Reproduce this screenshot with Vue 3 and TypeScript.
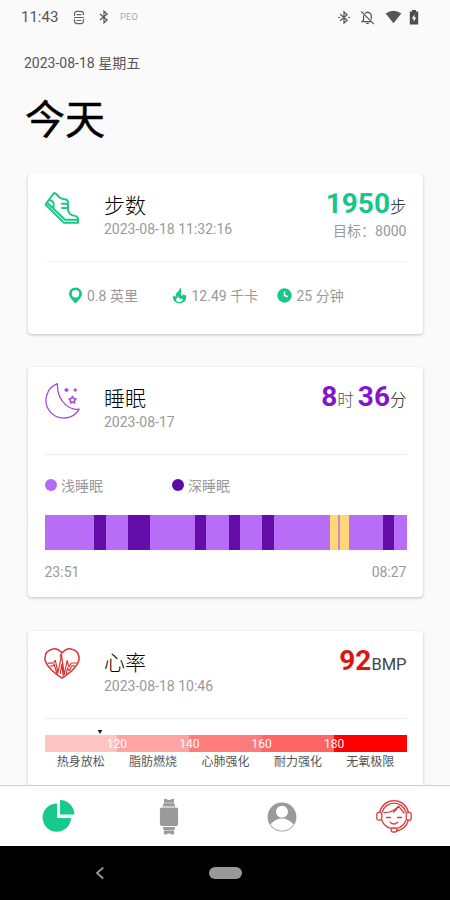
<script setup lang="ts">
interface SleepSegment {
  kind: 'light' | 'deep' | 'awake' | 'gap'
  span: number
}

interface HeartZone {
  label: string
  color: string
  upper?: number
}

const sleep: SleepSegment[] = [
  { kind: 'light', span: 49.5 },
  { kind: 'deep', span: 11.5 },
  { kind: 'light', span: 22.5 },
  { kind: 'deep', span: 22 },
  { kind: 'light', span: 45 },
  { kind: 'deep', span: 11 },
  { kind: 'light', span: 22.5 },
  { kind: 'deep', span: 11 },
  { kind: 'light', span: 22.5 },
  { kind: 'deep', span: 11.5 },
  { kind: 'light', span: 56 },
  { kind: 'awake', span: 8.5 },
  { kind: 'gap', span: 2 },
  { kind: 'awake', span: 9 },
  { kind: 'light', span: 33.5 },
  { kind: 'deep', span: 11.5 },
  { kind: 'light', span: 12.5 },
]

const zones: HeartZone[] = [
  { label: '热身放松', color: '#ffc5c5', upper: 120 },
  { label: '脂肪燃烧', color: '#ffa3a3', upper: 140 },
  { label: '心肺强化', color: '#ff7c7c', upper: 160 },
  { label: '耐力强化', color: '#ff6565', upper: 180 },
  { label: '无氧极限', color: '#fe0000' },
]
</script>

<template>
  <div class="screen">
    <header class="status">
      <span class="clock">11:43</span>
      <svg class="s-cast" viewBox="0 0 12 16" fill="none" stroke="#666" stroke-width="1.3">
        <path d="M1.2 6.5V4.5Q1.2 1.5 4 1.5H8Q10.8 1.5 10.8 4.5V5.2M1.2 9.5V11.5Q1.2 14.5 4 14.5H8Q10.8 14.5 10.8 11.5V9.5M3.4 5H8.6M3.4 11.2H8.6M.6 8H11.4" />
      </svg>
      <svg class="s-bt" viewBox="0 0 10 14" fill="none" stroke="#555" stroke-width="1.2">
        <path d="M1 4L8.2 10L5 12.8V1.2L8.2 4L1 10" />
      </svg>
      <span class="peo">PEO</span>
      <span class="grow"></span>
      <svg class="s-bt2" viewBox="0 0 14 16" fill="none" stroke="#555" stroke-width="1.3">
        <path d="M3 4.5L10.3 11L7 14V2L10.3 5L3 11.5M.8 8H2.8M11.2 8H13.2" />
      </svg>
      <svg class="s-bell" viewBox="0 0 16 16" fill="none" stroke="#555" stroke-width="1.3">
        <path d="M1.2 1.5L14.8 15M3.8 5.5V11L2.2 12.5H12M5.2 3.8L8 2.3Q12 3 12 6.5V10M6.7 14.2H9.3" />
      </svg>
      <svg class="s-wifi" viewBox="0 0 18 14"><path d="M.7 3.4Q9-2.6 17.3 3.4L9 13.6Z" fill="#555" /></svg>
      <svg class="s-bat" viewBox="0 0 10 15">
        <path d="M3 0H7V1.6H9.2V14.6H.8V1.6H3Z" fill="#4d4d4d" />
        <path d="M5.5 4.2L2.8 8.7H4.6V12L7.3 7.6H5.5Z" fill="#fff" />
      </svg>
    </header>

    <div class="heading">
      <div class="date">2023-08-18 星期五</div>
      <h1>今天</h1>
    </div>

    <main class="cards">
      <section class="card steps">
        <div class="head">
          <svg class="icon" viewBox="0 0 36 36" fill="none" stroke="#17c787" stroke-width="1.9" stroke-linejoin="round" stroke-linecap="round">
            <path d="M9.7 2.3L1.5 13.5L19.7 31.7H34V27.5Q33.4 24.8 28.5 24.4Q25.5 23.5 24 19.5V11Q23.5 8.5 20.5 8.3Q16.5 8 14.2 5.3Q12.3 1.7 9.7 2.3Z" />
            <path d="M3.2 11.7L21 28.7H33.6M5.3 9.2Q9.5 9.5 9.7 13.2V16.2M17.8 12.8H22.8M18 17H23.5" />
          </svg>
          <div class="title"><h2>步数</h2><p>2023-08-18 11:32:16</p></div>
          <div class="value">
            <div class="big"><b>1950</b>步</div>
            <p>目标：8000</p>
          </div>
        </div>
        <div class="stats">
          <div class="stat place">
            <svg viewBox="0 0 16 18"><path fill-rule="evenodd" d="M8 .4A7 7 0 0 0 1 7.4Q1 10.8 8 17.6Q15 10.8 15 7.4A7 7 0 0 0 8 .4ZM8 3.2A4 4 0 1 1 8 11.2A4 4 0 0 1 8 3.2Z" fill="#17c787" /></svg>
            <span>0.8 英里</span>
          </div>
          <div class="stat fire">
            <svg viewBox="0 0 16 18"><path fill-rule="evenodd" d="M8.2.3Q10.8 2.4 9.7 5.6Q8.7 7.7 10.4 9Q11.8 9.8 11.5 6.5Q12.2 8.3 13.3 8.6Q14.6 8.4 14.4 7.6Q16.5 12.2 13 15.6Q8 19.2 3.4 16Q-.2 12.7 1.3 8.6Q2.6 10.8 3.9 9.7Q3.4 7.2 6.2 4.9Q8.8 3 8.2.3ZM6.8 9.5Q6.6 11 5 12Q3.4 14.4 6 15.7Q8.8 16.8 10.8 14.9Q12 13.5 10.8 12.2Q9.5 13 8.2 12.2Q6.8 11.3 6.8 9.5Z" fill="#17c787" /></svg>
            <span>12.49 千卡</span>
          </div>
          <div class="stat time">
            <svg viewBox="0 0 16 18"><circle cx="8" cy="9" r="7.7" fill="#17c787" /><path d="M8 4.8V9L11.4 10.4" stroke="#fff" stroke-width="1.6" fill="none" /></svg>
            <span>25 分钟</span>
          </div>
        </div>
      </section>

      <section class="card sleep">
        <div class="head">
          <svg class="icon" viewBox="0 0 36 36" fill="none" stroke="#a14bdb" stroke-width="1.3" stroke-linejoin="round">
            <path d="M13.3.7A17.8 17.8 0 1 0 35.2 26.2Q28 27 22.2 22.3Q13 14.5 13.3.7Z" />
            <path d="M28.5 13.4L29.7 15.6L32 16L30.4 17.7L30.7 20L28.5 19L26.3 20L26.6 17.7L25 16L27.3 15.6Z" stroke-width="1.5" />
            <path d="M22.5 4.9L23.4 6.1L24.6 7L23.4 7.9L22.5 9.1L21.6 7.9L20.4 7L21.6 6.1ZM31.2 5.4L31.9 6.3L32.8 7L31.9 7.7L31.2 8.6L30.5 7.7L29.6 7L30.5 6.3Z" fill="#a14bdb" stroke-width=".7" />
          </svg>
          <div class="title"><h2>睡眠</h2><p>2023-08-17</p></div>
          <div class="value"><div class="big"><b>8</b><span class="hour">时</span> <b>36</b>分</div></div>
        </div>
        <div class="legend">
          <div><i class="dot light-dot"></i>浅睡眠</div>
          <div><i class="dot deep-dot"></i>深睡眠</div>
        </div>
        <div class="sleep-bar">
          <span v-for="(s, i) in sleep" :key="i" :class="s.kind" :style="{ flexGrow: s.span }"></span>
        </div>
        <div class="range"><span>23:51</span><span>08:27</span></div>
      </section>

      <section class="card heart">
        <div class="head">
          <svg class="icon" viewBox="0 0 36 36" fill="none" stroke="#dc3434" stroke-width="1.5" stroke-linejoin="round">
            <path d="M18 5.8Q13.5 1 9 1.9Q1.2 3.3.9 11.3Q1.1 20 18 31.2Q34.9 20 35.1 11.3Q34.8 3.3 27 1.9Q22.5 1 18 5.8Z" />
            <path d="M18 5.8L15.8 9.5M3.6 16.2H9L11.3 13.4L14 25.5L17.5 8L20.3 27.5L23.1 13.5L25 20L27.4 16H33M5.5 19H8.5L10.2 17.5L13.4 28M16.2 27L17.8 17L19.2 29.5M22.2 27.5L23.5 21L25.2 23.7L28 18.8H31" stroke-width="1.2" />
          </svg>
          <div class="title"><h2>心率</h2><p>2023-08-18 10:46</p></div>
          <div class="value"><div class="big"><b>92</b>BMP</div></div>
        </div>
        <div class="pointer"><svg viewBox="0 0 6 5"><path d="M0 0H6L3 5Z" fill="#222" /></svg></div>
        <div class="zones">
          <div v-for="z in zones" :key="z.label" class="zone">
            <div class="band" :style="{ background: z.color }"><span v-if="z.upper">{{ z.upper }}</span></div>
            <div class="name">{{ z.label }}</div>
          </div>
        </div>
      </section>
    </main>

    <nav class="tabs">
      <div class="tab">
        <svg width="34" height="36" viewBox="0 0 34 36" fill="#17c98a"><path d="M15 4.4V18.9H29A14.2 14.2 0 1 1 15 4.4Z" /><path d="M18 1A14.5 14.5 0 0 1 32.3 15.5H18Z" /></svg>
      </div>
      <div class="tab">
        <svg width="20" height="38" viewBox="0 0 20 38" fill="#9a9a9a">
          <rect x=".9" y="9.5" width="18.2" height="18.4" rx="2" />
          <path d="M5 1H8L8.5 2H11.5L12 1H15V4.7H5ZM4.6 5.2H15.4L16.2 8.4H3.8ZM3.8 29H16.2L15.4 32.2H4.6ZM5 32.7H15V36.6H12L11.5 35.6H8.5L8 36.6H5Z" />
        </svg>
      </div>
      <div class="tab profile">
        <svg width="30" height="30" viewBox="0 0 30 30">
          <circle cx="15" cy="15" r="14.4" fill="#9a9a9a" />
          <path d="M3.4 22.3Q9 16.6 15 16.6T26.6 22.3A13.7 13.7 0 0 1 3.4 22.3Z" fill="#fff" />
          <circle cx="15" cy="9.8" r="6" fill="#fff" />
        </svg>
      </div>
      <div class="tab">
        <svg width="36" height="34" viewBox="0 0 36 34" fill="none" stroke="#dc3c3c" stroke-width="1.3" stroke-linecap="round">
          <path d="M3.7 12A14.7 14.7 0 0 1 32.3 12M6.2 12A12.3 12.3 0 0 1 29.8 12M6 20.5A12.3 12.3 0 0 0 15.2 28.3M29.8 20.5A12.3 12.3 0 0 1 20.8 28.3M32.2 20.7Q30 28.5 20.8 31" />
          <rect x=".8" y="12.4" width="5" height="7.8" rx="2" />
          <rect x="30.2" y="12.4" width="5" height="7.8" rx="2" />
          <rect x="15.2" y="28" width="5.6" height="4" rx="1.5" />
          <path d="M8 12.7Q17 12.8 22.5 6.2Q20.5 10 17.5 12.3M22.5 6.2L28 13M10.5 17.5H14.5M21.5 17.5H25.5M14.3 22.2Q18 25.8 21.7 22.2" />
        </svg>
      </div>
    </nav>

    <footer class="system">
      <svg width="10" height="14" viewBox="0 0 10 14"><path d="M8.2 1.5L2 7L8.2 12.5" fill="none" stroke="#999" stroke-width="1.8" /></svg>
      <span class="home"></span>
      <span class="blank"></span>
    </footer>
  </div>
</template>

<style>
html,
body {
  margin: 0;
  background: #fafafa;
}
</style>

<style scoped>
* {
  box-sizing: border-box;
}
.screen {
  width: 450px;
  height: 900px;
  overflow: hidden;
  display: flex;
  flex-direction: column;
  background: #fafafa;
  font-family: Roboto, 'Noto Sans CJK SC', sans-serif;
  color: #333;
}
h1,
h2,
p {
  margin: 0;
}
svg {
  display: block;
  flex: none;
}
.status {
  height: 34px;
  flex: none;
  display: flex;
  align-items: center;
  padding: 0 31px 0 21px;
}
.clock {
  width: 52px;
  font-size: 15px;
  color: #555;
}
.s-cast {
  width: 12px;
  height: 15px;
}
.s-bt {
  width: 10px;
  height: 14px;
  margin-left: 14px;
}
.peo {
  margin-left: 11px;
  font-size: 9px;
  color: #aaa;
  letter-spacing: 0.4px;
}
.grow {
  flex: 1;
}
.s-bt2 {
  width: 14px;
  height: 15px;
  margin-right: 9px;
}
.s-bell {
  width: 15px;
  height: 15px;
  margin-right: 10px;
}
.s-wifi {
  width: 17px;
  height: 14px;
  margin-right: 7px;
}
.s-bat {
  width: 10px;
  height: 15px;
}
.heading {
  height: 140px;
  flex: none;
  padding: 19px 25px 0 24px;
}
.date {
  font-size: 14px;
  line-height: 20px;
  color: #555;
}
h1 {
  margin: 18px 0 0 1px;
  font-size: 40px;
  line-height: 60px;
  font-weight: 400;
  -webkit-text-stroke: 0.5px #000;
  color: #000;
}
.cards {
  flex: 1;
  min-height: 0;
  overflow: hidden;
  padding: 0 27px 0 28px;
  display: flex;
  flex-direction: column;
  gap: 33px;
}
.card {
  flex: none;
  background: #fff;
  border-radius: 4px;
  box-shadow: 0 1px 3px rgba(0, 0, 0, 0.25);
  padding: 0 16.5px;
}
.steps {
  height: 160px;
}
.sleep {
  height: 230px;
}
.heart {
  height: 190px;
  margin-top: 1px;
}
.head {
  display: flex;
  height: 88px;
  padding-top: 16px;
  border-bottom: 1px solid #ececec;
}
.steps .head {
  border-bottom-color: #f3f3f3;
}
.icon {
  width: 36px;
  height: 36px;
  margin: 0 24px 0 -0.5px;
}
.steps .icon {
  margin-top: 1px;
}
.title {
  flex: 1;
}
h2 {
  padding-top: 1px;
  font-size: 21px;
  line-height: 30px;
  height: 30px;
  font-weight: 300;
  color: #000;
}
p {
  font-size: 14px;
  line-height: 18px;
  color: #999;
}
.value {
  text-align: right;
}
.big {
  font-size: 16.5px;
  font-weight: 300;
  line-height: 30px;
  white-space: nowrap;
  color: #111;
  margin-top: -1px;
  height: 33px;
}
.heart .big {
  font-weight: 400;
  color: #444;
}
.big b {
  font-size: 28px;
  font-weight: 700;
}
.hour {
  color: #555;
}
.steps .big b {
  color: #17c787;
}
.sleep .big b {
  color: #8217c9;
}
.heart .big b {
  color: #dc1414;
}
.stats {
  display: flex;
  padding: 24px 0 0 23px;
}
.stat {
  display: flex;
  align-items: center;
  height: 18px;
  font-size: 14px;
  color: #999;
  white-space: nowrap;
}
.stat svg {
  width: 15px;
  height: 17px;
  margin-right: 4.5px;
}
.place {
  width: 104.5px;
}
.fire {
  width: 105px;
}
.legend {
  display: flex;
  height: 60px;
  font-size: 14px;
  color: #999;
}
.legend div {
  width: 127px;
  height: 60px;
  display: flex;
  align-items: center;
}
.dot {
  width: 12px;
  height: 12px;
  border-radius: 50%;
  margin-right: 4.5px;
}
.light-dot {
  background: #b46af4;
}
.deep-dot {
  background: #5c0aa5;
}
.sleep-bar {
  display: flex;
  height: 35px;
}
.sleep-bar span {
  flex: 0 0 0;
}
.sleep-bar .light {
  background: #b76df6;
}
.sleep-bar .deep {
  background: #640daa;
}
.sleep-bar .awake {
  background: #ffd776;
}
.sleep-bar .gap {
  background: #cb8cc4;
}
.range {
  display: flex;
  justify-content: space-between;
  margin-top: 13px;
  font-size: 14px;
  line-height: 18px;
  color: #999;
}
.pointer {
  height: 16px;
  padding: 11px 0 0 52.5px;
}
.pointer svg {
  width: 6px;
  height: 4px;
}
.zones {
  display: grid;
  grid-template-columns: repeat(5, 1fr);
}
.band {
  height: 17px;
  display: flex;
  justify-content: flex-end;
}
.band span {
  position: relative;
  z-index: 1;
  width: 30px;
  margin-right: -15px;
  text-align: center;
  font-size: 12px;
  line-height: 18px;
  color: #fff;
}
.name {
  padding-top: 1px;
  font-size: 12px;
  line-height: 18px;
  text-align: center;
  color: #555;
}
.tabs {
  height: 61px;
  flex: none;
  display: grid;
  grid-template-columns: repeat(4, 1fr);
  background: #fff;
  border-top: 1px solid #ccc;
  z-index: 2;
}
.tab {
  display: flex;
  align-items: center;
  justify-content: center;
  padding-top: 1px;
}
.tab:first-child {
  padding-left: 5px;
}
.profile {
  padding-left: 2px;
}
.system {
  height: 54px;
  flex: none;
  background: #000;
  display: flex;
  align-items: center;
  justify-content: space-between;
  padding: 0 95px;
}
.home {
  width: 33px;
  height: 12px;
  border-radius: 6px;
  background: #999;
}
.blank {
  width: 10px;
}
</style>
